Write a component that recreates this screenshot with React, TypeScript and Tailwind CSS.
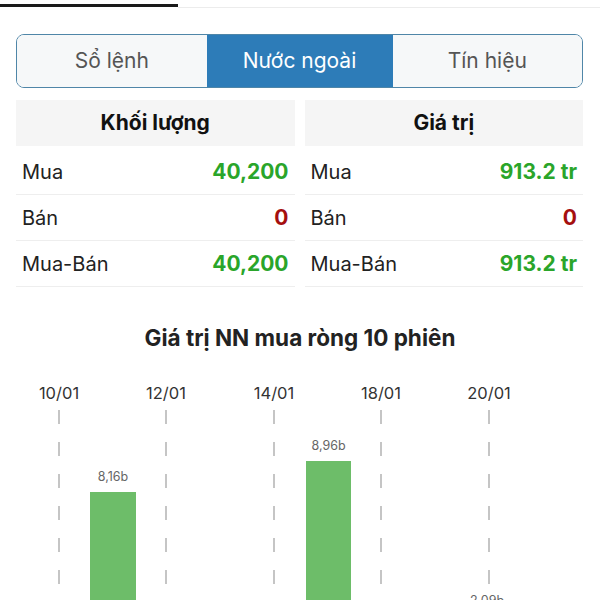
import React from 'react';

type Row = { label: string; value: string; tone: 'up' | 'down' };

const volumeRows: Row[] = [
  { label: 'Mua', value: '40,200', tone: 'up' },
  { label: 'Bán', value: '0', tone: 'down' },
  { label: 'Mua-Bán', value: '40,200', tone: 'up' },
];

const valueRows: Row[] = [
  { label: 'Mua', value: '913.2 tr', tone: 'up' },
  { label: 'Bán', value: '0', tone: 'down' },
  { label: 'Mua-Bán', value: '913.2 tr', tone: 'up' },
];

const GRID = [
  { x: 59, label: '10/01' },
  { x: 166, label: '12/01' },
  { x: 274, label: '14/01' },
  { x: 381, label: '18/01' },
  { x: 489, label: '20/01' },
];

const BARS = [
  { x: 90, w: 46, top: 117, label: '8,16b' },
  { x: 306, w: 45, top: 86, label: '8,96b' },
];

const StatTable = ({ title, rows }: { title: string; rows: Row[] }) => (
  <div className="flex-1 flex flex-col">
    <div className="h-[46px] bg-[#f5f5f5] flex items-center justify-center text-[21px] font-bold text-[#111] mb-[3px]">
      {title}
    </div>
    {rows.map((r) => (
      <div key={r.label} className="h-[46px] flex items-center justify-between px-[6px] border-b border-[#eeeeee]">
        <span className="text-[20px] text-[#222]">{r.label}</span>
        <span className={r.tone === 'up' ? 'text-[21px] font-bold text-[#2aa52a]' : 'text-[21px] font-bold text-[#a50f0f]'}>
          {r.value}
        </span>
      </div>
    ))}
  </div>
);

const NetBuyChart = () => (
  <svg width="600" height="240" viewBox="0 0 600 240" className="block">
    {GRID.map((g) => (
      <g key={g.label}>
        <text x={g.x} y={24} textAnchor="middle" fontSize="16.5" fill="#333" fontFamily="Inter, sans-serif">
          {g.label}
        </text>
        <line x1={g.x} y1={35} x2={g.x} y2={240} stroke="#b3b3b3" strokeWidth="1.5" strokeDasharray="14 18" />
      </g>
    ))}
    {BARS.map((b) => (
      <g key={b.label}>
        <rect x={b.x} y={b.top} width={b.w} height={240 - b.top} fill="#6dbd69" />
        <text x={b.x + b.w / 2} y={b.top - 11} textAnchor="middle" fontSize="12.5" fill="#666" fontFamily="Inter, sans-serif">
          {b.label}
        </text>
      </g>
    ))}
    {/* third label sits below the fold in the app */}
    <text x={487} y={230} textAnchor="middle" fontSize="12.5" fill="#666" fontFamily="Inter, sans-serif">
      2,09b
    </text>
  </svg>
);

export default function App() {
  return (
    <div className="w-[600px] h-[600px] overflow-hidden bg-white font-['Inter',sans-serif]">
      <div className="flex items-start pt-[4px]">
        <div className="w-[178px] h-[3px] bg-[#1a1a1a]" />
        <div className="flex-1 h-px mt-[3px] bg-[#ececec]" />
      </div>

      <div className="mx-4 mr-[17px] mt-[26px] h-[54px] flex rounded-lg border-[1.5px] border-[#4f86a8] overflow-hidden">
        <div className="flex-1 flex items-center justify-center bg-[#f6f8f9] text-[21px] text-[#555]">Sổ lệnh</div>
        <div className="w-[186px] flex items-center justify-center bg-[#2d7cb8] text-[21px] text-white">Nước ngoài</div>
        <div className="flex-1 flex items-center justify-center bg-[#f6f8f9] text-[21px] text-[#555]">Tín hiệu</div>
      </div>

      <div className="mx-4 mr-[17px] mt-3 flex gap-[10px]">
        <StatTable title="Khối lượng" rows={volumeRows} />
        <StatTable title="Giá trị" rows={valueRows} />
      </div>

      <div className="mt-[36px] h-[30px] leading-[30px] text-center text-[22.5px] font-bold text-[#222]">Giá trị NN mua ròng 10 phiên</div>

      <div className="mt-[22px]">
        <NetBuyChart />
      </div>
    </div>
  );
}
